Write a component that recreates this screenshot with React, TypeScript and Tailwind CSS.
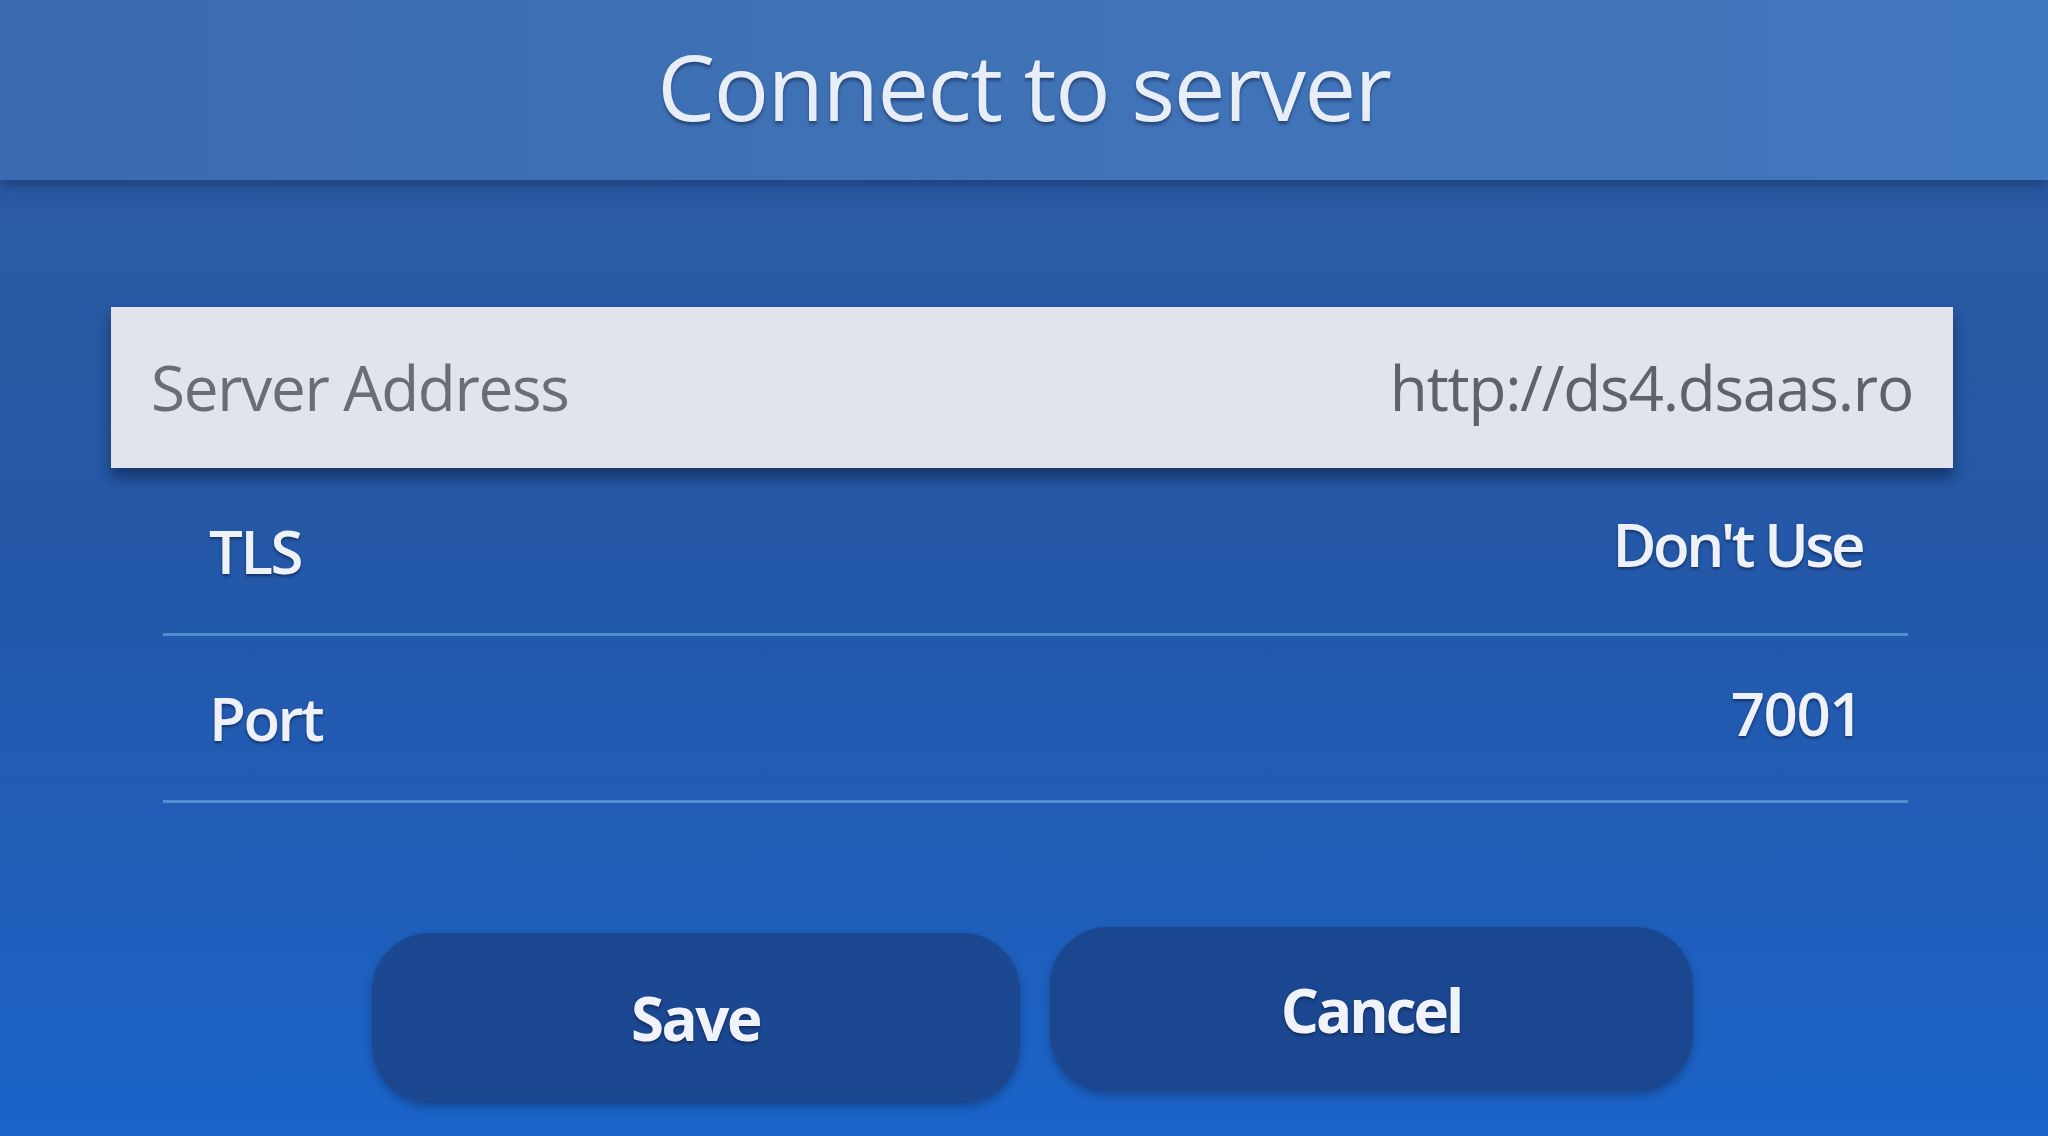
export default function App() {
  return (
    <div
      className="w-[2048px] h-[1136px] overflow-hidden flex flex-col bg-gradient-to-b from-[#2e5ca2] via-[#2458a8] to-[#1a63c8]"
      style={{ fontFamily: "'Open Sans', 'Noto Sans', 'DejaVu Sans', sans-serif" }}
    >
      {/* Title bar */}
      <div className="h-[180px] shrink-0 flex items-center justify-center bg-gradient-to-r from-[#3a6bb0] via-[#4072b6] to-[#4177bd] shadow-[0_6px_12px_rgba(20,40,90,0.5)]">
        <h1 className="text-[92px] leading-none text-[#e8eef7] tracking-[-1.5px] [text-shadow:0_3px_3px_rgba(20,40,80,0.55)] pb-[8px]">
          Connect to server
        </h1>
      </div>

      {/* Server address (focused) */}
      <div className="mt-[127px] ml-[111px] mr-[95px] h-[161px] shrink-0 flex items-center justify-between px-[40px] bg-[#e1e4ea] shadow-[0_10px_14px_rgba(10,25,60,0.55)]">
        <span className="text-[62px] text-[#6a6d76] tracking-[-1.3px]">Server Address</span>
        <span className="text-[62px] text-[#5f626b] tracking-[-1.2px]">http://ds4.dsaas.ro</span>
      </div>

      {/* Rows */}
      <div className="ml-[163px] mr-[140px] flex flex-col">
        <div className="h-[168px] flex items-center justify-between px-[46px] border-b-[3px] border-[#4f8fd2]">
          <span className="text-[60px] font-semibold text-[#eef2f8] tracking-[-2.5px] [text-shadow:0_2px_3px_rgba(10,25,60,0.6)]">TLS</span>
          <span className="text-[60px] font-semibold text-[#eef2f8] tracking-[-3.5px] -mt-[14px] [text-shadow:0_2px_3px_rgba(10,25,60,0.6)]">Don't Use</span>
        </div>
        <div className="h-[167px] flex items-center justify-between px-[46px] border-b-[3px] border-[#4f8fd2]">
          <span className="text-[60px] font-semibold text-[#eef2f8] tracking-[-2.5px] [text-shadow:0_2px_3px_rgba(10,25,60,0.6)]">Port</span>
          <span className="text-[60px] font-semibold text-[#eef2f8] tracking-[-1.5px] -mt-[10px] [text-shadow:0_2px_3px_rgba(10,25,60,0.6)]">7001</span>
        </div>
      </div>

      {/* Buttons */}
      <div className="mt-[130px] flex justify-center gap-[30px] pl-[16px]">
        <button className="w-[648px] h-[170px] rounded-[58px] bg-[#1c4791] flex items-center justify-center shadow-[0_4px_8px_rgba(10,25,60,0.35)]">
          <span className="text-[60px] font-bold text-[#f0f4fa] tracking-[-2.5px] [text-shadow:0_2px_3px_rgba(10,25,60,0.6)]">Save</span>
        </button>
        <button className="w-[643px] h-[165px] -mt-[6px] rounded-[58px] bg-[#1b4790] flex items-center justify-center shadow-[0_4px_8px_rgba(10,25,60,0.35)]">
          <span className="text-[60px] font-bold text-[#f0f4fa] tracking-[-3px] [text-shadow:0_2px_3px_rgba(10,25,60,0.6)]">Cancel</span>
        </button>
      </div>
    </div>
  )
}
